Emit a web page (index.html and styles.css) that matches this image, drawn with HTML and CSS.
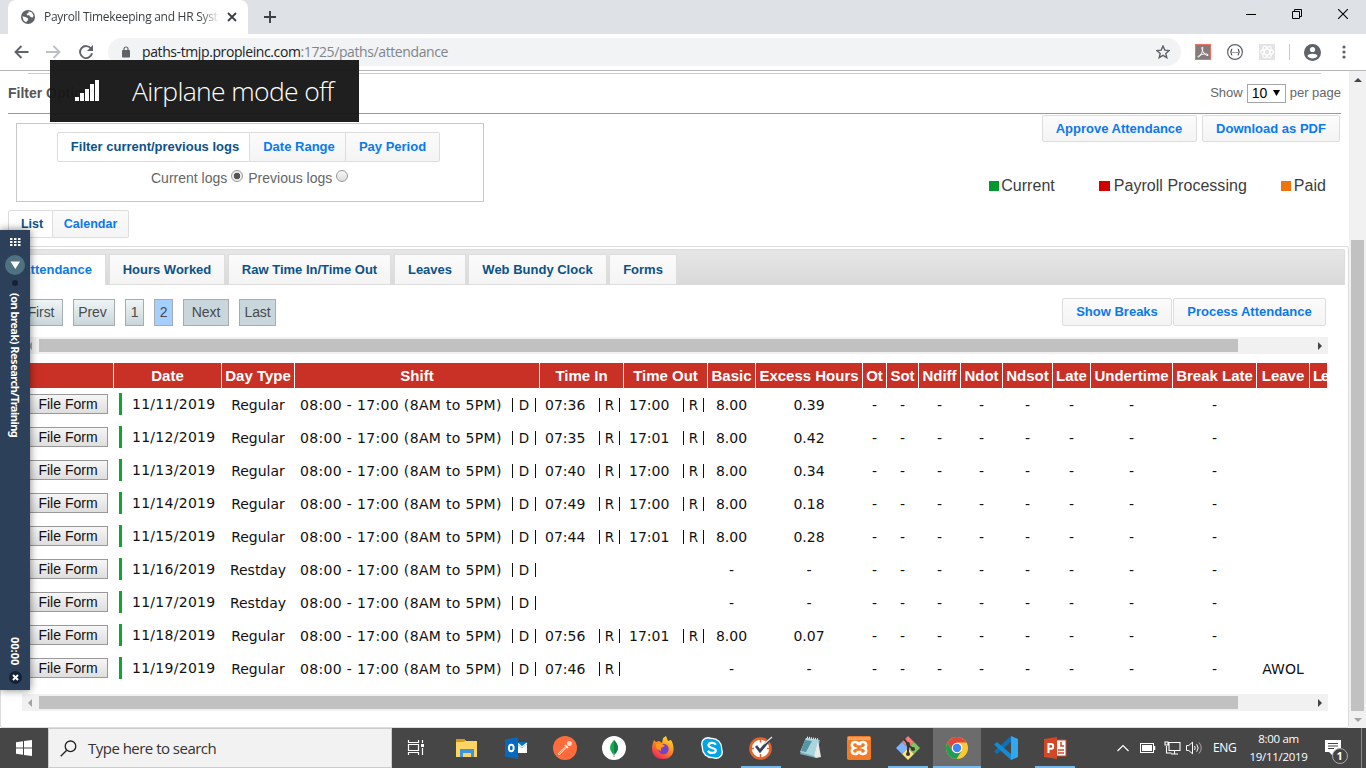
FILE: index.html
```html
<!DOCTYPE html>
<html lang="en">
<head>
<meta charset="utf-8">
<title>Payroll Timekeeping and HR System</title>
<link rel="stylesheet" href="styles.css">
</head>
<body>
<div class="tabstrip">
  <div class="browser-tab">
    <svg class="globe" width="14" height="14" viewBox="0 0 14 14"><circle cx="7" cy="7" r="7" fill="#5f6368"/><path d="M7.5 1.3 11 2.5 12.6 6 11.2 7.8 9 6.6 8 5 6.2 5.4 5.6 3.8 7.6 3zM1.4 6.3 4.5 7 7.2 8.6 6.6 10.6 5 12.2 2.6 10.6z" fill="#fff"/></svg>
    <span class="browser-title">Payroll Timekeeping and HR Syst</span>
    <svg class="tab-x" width="10" height="10" viewBox="0 0 10 10"><path d="M1 1l8 8M9 1l-8 8" stroke="#3c4043" stroke-width="1.8"/></svg>
  </div>
  <svg class="new-tab" width="12" height="12" viewBox="0 0 12 12"><path d="M6 0v12M0 6h12" stroke="#3c4043" stroke-width="1.9"/></svg>
  <div class="window-controls">
    <svg width="10" height="10" viewBox="0 0 10 10"><path d="M0 5.5h10" stroke="#000"/></svg>
    <svg width="10" height="10" viewBox="0 0 10 10"><path d="M.5 2.5h7v7h-7zM2.5 2V.5h7v7H8" fill="none" stroke="#000"/></svg>
    <svg width="10" height="10" viewBox="0 0 10 10"><path d="M0 0l10 10M10 0L0 10" stroke="#000" stroke-width="1.1"/></svg>
  </div>
</div>
<div class="toolbar">
  <svg class="nav-back" width="15" height="14" viewBox="0 0 15 14"><path d="M14.500 7H1.500M7.500 1l-6 6 6 6" fill="none" stroke="#5f6368" stroke-width="1.9"/></svg>
  <svg class="nav-forward" width="15" height="14" viewBox="0 0 15 14"><path d="M0 7h13M7.500 1l6 6-6 6" fill="none" stroke="#bdc1c6" stroke-width="1.9"/></svg>
  <svg class="nav-reload" width="14" height="14" viewBox="0 0 14 14"><path d="M12 3.600A6 6 0 1 0 13 8.200" fill="none" stroke="#5f6368" stroke-width="1.9"/><path d="M14 0v6H8z" fill="#5f6368"/></svg>
  <div class="omnibox">
    <svg width="8" height="12" viewBox="0 0 8 12"><path d="M2 5V3a2 2 0 0 1 4 0v2" fill="none" stroke="#5f6368" stroke-width="1.200"/><rect y="4" width="8" height="7.500" rx=".8" fill="#5f6368"/></svg>
    <span class="url">paths-tmjp.propleinc.com<i>:1725/paths/attendance</i></span>
    <svg class="star" width="14" height="14" viewBox="0 0 14 14"><path d="M7 1l1.800 4.100 4.300.4-3.300 2.900 1 4.300L7 10.400l-3.800 2.300 1-4.300L.9 5.500l4.300-.4z" fill="none" stroke="#5f6368" stroke-width="1.400"/></svg>
  </div>
  <div class="extensions">
    <svg width="16" height="16" viewBox="0 0 16 16"><rect x=".5" y=".5" width="15" height="15" fill="#857b7b" stroke="#ee705e"/><path d="M7.300 3c-.8 0-.6 2 .7 4.500S11.500 12 13 11.500c1-.8-1-2-4-1.500s-6 1.700-6 2.800 2-.2 3.300-3S8.300 3 7.300 3z" fill="none" stroke="#fff" stroke-width="1"/></svg>
    <svg width="16" height="16" viewBox="0 0 16 16"><circle cx="8" cy="8" r="7.400" fill="#fff" stroke="#5f6368" stroke-width="1.200"/><path d="M5.300 5c-1.600 0-.3 2.600-1.900 3 1.600.4.300 3 1.900 3M10.700 5c1.600 0 .3 2.600 1.900 3-1.600.4-.3 3-1.900 3" fill="none" stroke="#444" stroke-width="1.100"/><path d="M5.500 8.500h5" stroke="#444" stroke-width="1.100" stroke-dasharray="1 1"/></svg>
    <svg width="16" height="16" viewBox="0 0 16 16"><rect width="16" height="16" fill="#e3e3e3"/><g fill="none" stroke="#fff" stroke-width="1.100"><ellipse cx="8" cy="8" rx="6.500" ry="2.600"/><ellipse cx="8" cy="8" rx="6.500" ry="2.600" transform="rotate(60 8 8)"/><ellipse cx="8" cy="8" rx="6.500" ry="2.600" transform="rotate(120 8 8)"/></g></svg>
    <span class="divider"></span>
    <svg class="avatar" width="17" height="17" viewBox="0 0 17 17"><circle cx="8.500" cy="8.500" r="8.500" fill="#5f6368"/><circle cx="8.500" cy="5.500" r="2.600" fill="#fff"/><path d="M3.400 12c1-3 9.200-3 10.200 0-2 3.200-8.200 3.200-10.200 0z" fill="#fff"/></svg>
    <svg class="kebab" width="4" height="14" viewBox="0 0 4 14"><circle cx="2" cy="2" r="1.600" fill="#5f6368"/><circle cx="2" cy="7" r="1.600" fill="#5f6368"/><circle cx="2" cy="12" r="1.600" fill="#5f6368"/></svg>
  </div>
</div>
<div class="viewport">
  <main class="page">
    <div class="rule-blue"></div>
    <div class="filter-head">
      <b>Filter Options</b>
      <span class="per-page">Show <span class="select">10<svg width="7" height="6" viewBox="0 0 7 6"><path d="M0 0h7L3.500 6z" fill="#000"/></svg></span> per page</span>
    </div>
    <div class="upper">
      <div class="filter-box">
        <div class="segmented"><span class="on w-cur">Filter current/previous logs</span><span class="w-range">Date Range</span><span class="w-period">Pay Period</span></div>
        <div class="radios"><span>Current logs</span><i class="radio checked"></i><span>Previous logs</span><i class="radio"></i></div>
      </div>
      <div class="upper-right">
        <div class="actions"><span class="btn w-approve">Approve Attendance</span><span class="btn w-pdf">Download as PDF</span></div>
        <div class="legend"><span class="green">Current</span><span class="red">Payroll Processing</span><span class="orange">Paid</span></div>
      </div>
    </div>
    <div class="segmented views"><span class="on w-list">List</span><span class="w-cal">Calendar</span></div>
    <section class="panel">
      <nav class="tabs"><span class="active">Attendance</span><span class="t-hours">Hours Worked</span><span class="t-raw">Raw Time In/Time Out</span><span class="t-leaves">Leaves</span><span class="t-web">Web Bundy Clock</span><span class="t-forms">Forms</span></nav>
      <div class="pager-row">
        <div class="pager"><span class="p-first">First</span><span class="p-prev">Prev</span><span class="p-num">1</span><span class="p-num sel">2</span><span class="p-next flat">Next</span><span class="p-last flat">Last</span></div>
        <div class="pager-actions"><span class="btn w-breaks">Show Breaks</span><span class="btn w-process">Process Attendance</span></div>
      </div>
      <div class="hscroll"><i class="arrow-left"></i><div class="thumb"></div><i class="arrow-right"></i></div>
      <div class="grid">
        <div class="row head"><span></span><span>Date</span><span>Day Type</span><span>Shift</span><span>Time In</span><span>Time Out</span><span>Basic</span><span>Excess Hours</span><span>Ot</span><span>Sot</span><span>Ndiff</span><span>Ndot</span><span>Ndsot</span><span>Late</span><span>Undertime</span><span>Break Late</span><span>Leave</span><span class="cut">Le</span></div>
        <div class="row"><span class="form"><button>File Form</button></span><span class="date">11/11/2019</span><span>Regular</span><span class="shift"><span>08:00 - 17:00 (8AM to 5PM)</span><em>D</em></span><span class="time"><span>07:36</span><em>R</em></span><span class="time"><span>17:00</span><em>R</em></span><span>8.00</span><span>0.39</span><span>-</span><span>-</span><span>-</span><span>-</span><span>-</span><span>-</span><span>-</span><span>-</span><span></span></div>
        <div class="row"><span class="form"><button>File Form</button></span><span class="date">11/12/2019</span><span>Regular</span><span class="shift"><span>08:00 - 17:00 (8AM to 5PM)</span><em>D</em></span><span class="time"><span>07:35</span><em>R</em></span><span class="time"><span>17:01</span><em>R</em></span><span>8.00</span><span>0.42</span><span>-</span><span>-</span><span>-</span><span>-</span><span>-</span><span>-</span><span>-</span><span>-</span><span></span></div>
        <div class="row"><span class="form"><button>File Form</button></span><span class="date">11/13/2019</span><span>Regular</span><span class="shift"><span>08:00 - 17:00 (8AM to 5PM)</span><em>D</em></span><span class="time"><span>07:40</span><em>R</em></span><span class="time"><span>17:00</span><em>R</em></span><span>8.00</span><span>0.34</span><span>-</span><span>-</span><span>-</span><span>-</span><span>-</span><span>-</span><span>-</span><span>-</span><span></span></div>
        <div class="row"><span class="form"><button>File Form</button></span><span class="date">11/14/2019</span><span>Regular</span><span class="shift"><span>08:00 - 17:00 (8AM to 5PM)</span><em>D</em></span><span class="time"><span>07:49</span><em>R</em></span><span class="time"><span>17:00</span><em>R</em></span><span>8.00</span><span>0.18</span><span>-</span><span>-</span><span>-</span><span>-</span><span>-</span><span>-</span><span>-</span><span>-</span><span></span></div>
        <div class="row"><span class="form"><button>File Form</button></span><span class="date">11/15/2019</span><span>Regular</span><span class="shift"><span>08:00 - 17:00 (8AM to 5PM)</span><em>D</em></span><span class="time"><span>07:44</span><em>R</em></span><span class="time"><span>17:01</span><em>R</em></span><span>8.00</span><span>0.28</span><span>-</span><span>-</span><span>-</span><span>-</span><span>-</span><span>-</span><span>-</span><span>-</span><span></span></div>
        <div class="row"><span class="form"><button>File Form</button></span><span class="date">11/16/2019</span><span>Restday</span><span class="shift"><span>08:00 - 17:00 (8AM to 5PM)</span><em>D</em></span><span></span><span></span><span>-</span><span>-</span><span>-</span><span>-</span><span>-</span><span>-</span><span>-</span><span>-</span><span>-</span><span>-</span><span></span></div>
        <div class="row"><span class="form"><button>File Form</button></span><span class="date">11/17/2019</span><span>Restday</span><span class="shift"><span>08:00 - 17:00 (8AM to 5PM)</span><em>D</em></span><span></span><span></span><span>-</span><span>-</span><span>-</span><span>-</span><span>-</span><span>-</span><span>-</span><span>-</span><span>-</span><span>-</span><span></span></div>
        <div class="row"><span class="form"><button>File Form</button></span><span class="date">11/18/2019</span><span>Regular</span><span class="shift"><span>08:00 - 17:00 (8AM to 5PM)</span><em>D</em></span><span class="time"><span>07:56</span><em>R</em></span><span class="time"><span>17:01</span><em>R</em></span><span>8.00</span><span>0.07</span><span>-</span><span>-</span><span>-</span><span>-</span><span>-</span><span>-</span><span>-</span><span>-</span><span></span></div>
        <div class="row"><span class="form"><button>File Form</button></span><span class="date">11/19/2019</span><span>Regular</span><span class="shift"><span>08:00 - 17:00 (8AM to 5PM)</span><em>D</em></span><span class="time"><span>07:46</span><em>R</em></span><span></span><span>-</span><span>-</span><span>-</span><span>-</span><span>-</span><span>-</span><span>-</span><span>-</span><span>-</span><span>-</span><span>AWOL</span></div>
      </div>
      <div class="hscroll"><i class="arrow-left"></i><div class="thumb"></div><i class="arrow-right"></i></div>
    </section>
  </main>
  <div class="vscroll"><i class="arrow-up"></i><div class="vthumb"></div><i class="arrow-down"></i></div>
</div>
<footer class="taskbar">
  <div class="start"><svg width="16" height="16" viewBox="0 0 16 16"><path d="M0 2.200 7 1.200V7.500H0zM8 1 16 0v7.500H8zM0 8.500h7v6.300L0 13.800zM8 8.500h8V16L8 15z" fill="#fff"/></svg></div>
  <div class="search"><svg width="17" height="17" viewBox="0 0 17 17"><circle cx="10.500" cy="6.300" r="5.300" fill="none" stroke="#222" stroke-width="1.300"/><path d="M6.700 10.200.7 16.200" stroke="#222" stroke-width="1.300"/></svg><span>Type here to search</span></div>
  <div class="apps">
    <span><svg width="18" height="18" viewBox="0 0 18 18"><path d="M1.500 5.500h10v6h-10zM1.500 1v2.500h10V1M1.500 16v-2.500h10V16M15.500 1v3M15.500 9v7" fill="none" stroke="#fff" stroke-width="1.200"/><rect x="14" y="5" width="3" height="3" fill="#fff"/></svg></span>
    <span><svg width="24" height="24" viewBox="0 0 24 24"><path d="M1 3h8l2 2h11v16H1z" fill="#fcd462"/><path d="M1 3h8l1.500 2L8 6H1z" fill="#d99a12"/><path d="M5 13h14v8h-3v-4H8v4H5z" fill="#3f94d9"/></svg></span>
    <span><svg width="24" height="24" viewBox="0 0 24 24"><rect x="12" y="6" width="11" height="11" fill="#fff"/><path d="M12 6h11v2l-5 4-5-4z" fill="#0872c4"/><path d="M14 7.500l4 3.500 5-4" fill="none" stroke="#fff" stroke-width="1.300"/><path d="M1 3.500 14 1v22L1 20.500z" fill="#0768bd"/><ellipse cx="7.300" cy="12" rx="2.400" ry="3.200" fill="none" stroke="#fff" stroke-width="1.900"/></svg></span>
    <span><svg width="24" height="24" viewBox="0 0 24 24"><circle cx="12" cy="12" r="12" fill="#ff6c3b"/><path d="M5.500 18.500 14 10" stroke="#ffe9df" stroke-width="2.200"/><path d="M6 18l8-8" stroke="#ff6c3b" stroke-width=".6"/><circle cx="16.300" cy="7.500" r="2.500" fill="#ffd9c9"/><path d="M12 9l3 3" stroke="#fff" stroke-width="1.500"/></svg></span>
    <span><svg width="24" height="24" viewBox="0 0 24 24"><circle cx="12" cy="12" r="12" fill="#fff"/><path d="M12 4c5 5 5.500 10 0 15-5.500-5-5-10 0-15z" fill="#13aa52"/><path d="M12 4c5 5 5.500 10 0 15z" fill="#128047"/><path d="M12 17v4" stroke="#90a090"/></svg></span>
    <span><svg width="24" height="24" viewBox="0 0 24 24"><defs><linearGradient id="fox" x1=".8" y1="0" x2=".2" y2="1"><stop offset="0" stop-color="#ffe32a"/><stop offset=".5" stop-color="#ff8420"/><stop offset="1" stop-color="#ed1d64"/></linearGradient></defs><path d="M3 4l2 2 3-1 3 2 1-5 3-2 2 5 3-1c5 8 3 19-8 19C4 23 1 18 1 12c0-3 1-5 2-8z" fill="url(#fox)"/><circle cx="12.500" cy="13" r="5.200" fill="#7542c8"/><path d="M5 8l6 0 3 2-4 2 0 3-5-3z" fill="#ff981e"/></svg></span>
    <span><svg width="24" height="24" viewBox="0 0 24 24"><circle cx="8" cy="8" r="7" fill="#fff"/><circle cx="16" cy="16" r="7" fill="#fff"/><circle cx="12" cy="12" r="10.300" fill="#fff"/><circle cx="8" cy="8" r="5.600" fill="#00a5e8"/><circle cx="16" cy="16" r="5.600" fill="#00a5e8"/><circle cx="12" cy="12" r="9" fill="#00a5e8"/><path d="M15.800 8.800C14.500 6 8.500 6.500 8.500 9.300c0 3.300 7.300 2 7.300 5.200 0 3-6.400 3.300-7.800.2" fill="none" stroke="#fff" stroke-width="2.200"/></svg></span>
    <span class="run"><svg width="24" height="24" viewBox="0 0 24 24"><circle cx="11.500" cy="12.500" r="10" fill="#fff" stroke="#e5642c" stroke-width="2.600"/><path d="M11.500 2.500v4M11.500 18v4M2 12.500h3M18 12.500h3" stroke="#e5642c" stroke-width="1.500"/><path d="M7 10l4 5L22 2" fill="none" stroke="#35445c" stroke-width="2.800"/><path d="M15 8l8-7" stroke="#ddd" stroke-width="1.400"/></svg></span>
    <span><svg width="24" height="24" viewBox="0 0 24 24"><path d="M8 2l14 2-4 18L2 18z" fill="#74aebb"/><path d="M8 2l12 2-4 16L2 16z" fill="#a9d6dc"/><path d="M7 4l7 1-6 11-5-1z" fill="#5695a4"/><path d="M20 4l3 17-5 1-2-2z" fill="#e9e9e9"/><path d="M9 1.500l12 2" stroke="#eee" stroke-dasharray="1 1" stroke-width="2"/></svg></span>
    <span><svg width="24" height="24" viewBox="0 0 24 24"><rect width="24" height="24" rx="2" fill="#f47b25"/><path d="M1 1h22v3H1z" fill="#f9a25f"/><path d="M8 6c-4 0-4 5-1 6-3 1-3 6 1 6 2 0 3-1 3-2h2c0 1 1 2 3 2 4 0 4-5 1-6 3-1 3-6-1-6-2 0-3 1-3 2h-2c0-1-1-2-3-2z" fill="none" stroke="#fff" stroke-width="2.600"/></svg></span>
    <span class="run"><svg width="24" height="24" viewBox="0 0 24 24"><path d="M12 0l6 6-6 6-6-6z" fill="#f57b7b"/><path d="M18 6l6 6-6 6-6-6z" fill="#7ec661"/><path d="M6 6l6 6-6 6-6-6z" fill="#80b3ff"/><path d="M12 12l6 6-6 6-6-6z" fill="#ffe082"/><path d="M8 3l4 5v10M12 9l5 4" fill="none" stroke="#3b3532" stroke-width="2"/><circle cx="12" cy="8" r="2" fill="#3b3532"/><circle cx="17" cy="13" r="2" fill="#3b3532"/><circle cx="12" cy="18" r="2" fill="#3b3532"/></svg></span>
    <span class="current"><svg width="24" height="24" viewBox="0 0 24 24"><circle cx="12" cy="12" r="11" fill="#fcc934"/><path d="M2.500 6.500A11 11 0 0 1 21.500 6.500H12L7.200 15z" fill="#e0483e"/><path d="M2.500 6.500A11 11 0 0 0 11.500 23l5.200-8.200-9.500.2z" fill="#1e9d58"/><circle cx="12" cy="12" r="5.300" fill="#fff"/><circle cx="12" cy="12" r="4.200" fill="#4285f4"/></svg></span>
    <span><svg width="24" height="24" viewBox="0 0 24 24"><path d="M17 0v6L3 18l-3-2.500z" fill="#0b71b8"/><path d="M17 24v-6L3 6 0 8.500z" fill="#168bd2"/><path d="M17 0l7 3v18l-7 3z" fill="#31a8ed"/></svg></span>
    <span class="run"><svg width="24" height="24" viewBox="0 0 24 24"><rect x="11" y="4" width="12" height="16" fill="#fff" stroke="#d24726"/><path d="M15 14h6M15 17h6M18 6v4h3" fill="none" stroke="#d24726" stroke-width="1.500"/><path d="M1 3l13-2v22L1 21z" fill="#d24726"/><path d="M5.500 17V8h2.200c3.400 0 3.400 4.800 0 4.800H5.500" fill="none" stroke="#fff" stroke-width="2"/></svg></span>
  </div>
  <div class="tray">
    <svg width="12" height="8" viewBox="0 0 12 8"><path d="M.5 7 6 1.500 11.500 7" fill="none" stroke="#fff" stroke-width="1.200"/></svg>
    <svg class="battery" width="16" height="10" viewBox="0 0 16 10"><rect x=".5" y=".5" width="13" height="9" fill="none" stroke="#fff"/><rect x="2" y="2" width="10" height="6" fill="#fff"/><path d="M14.500 3v4" stroke="#fff" stroke-width="1.500"/></svg>
    <svg class="net" width="17" height="14" viewBox="0 0 17 14"><path d="M5 1.500h11v8H5zM10.500 10v3M7 13h7M2.500 5v7h5M1 1h3v3H1z" fill="none" stroke="#fff" stroke-width="1.100"/></svg>
    <svg class="sound" width="17" height="14" viewBox="0 0 17 14"><path d="M.5 4.500h2.300L6.500 1.200v11.600L2.800 9.500H.5zM8.500 5q1.500 2 0 4M10.700 3.300q3 3.700 0 7.400" fill="none" stroke="#fff"/><path d="M13 1.500q4.500 5.500 0 11" fill="none" stroke="#aaa"/></svg>
    <span class="lang">ENG</span>
    <span class="clock"><span>8:00 am</span><span>19/11/2019</span></span>
    <span class="notify"><svg width="16" height="17" viewBox="0 0 16 17"><path d="M0 0h16v12H8v4l-4-4H0z" fill="#fff"/><path d="M3 3.500h10M3 6h10M3 8.500h6" stroke="#444"/></svg><b>1</b></span>
    <i class="desktop-edge"></i>
  </div>
</footer>
<aside class="tracker">
  <svg width="11" height="8" viewBox="0 0 11 8"><path d="M0 1h11M0 4h11M0 7h11" stroke="#fff" stroke-width="2" stroke-dasharray="2.500 1.500"/></svg>
  <svg class="down" width="20" height="20" viewBox="0 0 20 20"><circle cx="10" cy="10" r="10" fill="#4f7281"/><path d="M5.500 6.500h9.500l-4.700 7.500z" fill="#fff"/></svg>
  <i class="dot"></i>
  <span class="task">(on break) Research/Training</span>
  <span class="timer">00:00</span>
  <svg class="close" width="13" height="13" viewBox="0 0 13 13"><circle cx="6.500" cy="6.500" r="6.500" fill="#14213a"/><path d="M4 4l5 5M9 4L4 9" stroke="#fff" stroke-width="2"/></svg>
</aside>
<div class="toast"><svg width="25" height="22" viewBox="0 0 25 22"><path d="M0 17h4v4H0zM5 13h4v8H5zM10 9h4v12h-4zM15 4h4v17h-4zM20 0h4v21h-4z" fill="#fff"/></svg><span>Airplane mode off</span></div>
</body>
</html>
```
FILE: styles.css
```css
* { box-sizing: border-box; }
body { margin: 0; width: 1366px; height: 768px; overflow: hidden; position: relative; background: #fff; display: flex; flex-direction: column; font: 14px/16px "Liberation Sans", Arial, sans-serif; color: #555; white-space: nowrap; }
svg, i { display: block; flex: none; }
i { font-style: normal; }

.tabstrip { height: 34px; background: #dee1e6; display: flex; align-items: center; padding-left: 8px; }
.browser-tab { width: 240px; height: 34px; background: #fff; border-radius: 8px 8px 0 0; display: flex; align-items: center; padding-left: 13px; }
.browser-title { width: 177px; margin-left: 9px; font: 12px/16px "Open Sans", sans-serif; letter-spacing: -.28px; color: #3c4043; -webkit-mask-image: linear-gradient(90deg, #000 156px, transparent 176px); }
.tab-x { margin-left: 6px; }
.new-tab { margin-left: 16px; }
.window-controls { margin-left: auto; display: flex; gap: 36px; padding: 0 18px 6px 0; }
.toolbar { height: 37px; flex: none; border-bottom: 1px solid #b6b4b8; display: flex; align-items: center; padding: 0 0 0 14px; }
.nav-forward { margin-left: 17px; }
.nav-reload { margin-left: 18px; }
.omnibox { width: 1073px; height: 28px; margin-left: 15px; border-radius: 14px; background: #f1f3f4; display: flex; align-items: center; padding: 0 11px 0 14px; }
.url { font: 14px/18px "Open Sans", sans-serif; letter-spacing: -.4px; color: #202124; margin-left: 12px; }
.url i { display: inline; color: #80868b; }
.star { margin-left: auto; }
.extensions { display: flex; align-items: center; margin-left: 14px; }
.extensions svg + svg { margin-left: 16px; }
.divider { width: 1px; height: 16px; background: #c6c9cc; margin-left: 14px; }
.extensions .avatar { margin-left: 14px; }
.extensions svg.kebab { margin-left: 21px; }

.viewport { height: 657px; flex: none; display: flex; }
.page { width: 1349px; height: 657px; }
.rule-blue { height: 1px; margin: 2px 28px 0; background: #9edcf2; }
.filter-head { height: 40px; margin: 0 8px; border-bottom: 1px solid #999; display: flex; justify-content: space-between; align-items: center; padding-bottom: 1px; }
.filter-head b { color: #555; }
.per-page { display: flex; align-items: center; font-size: 13px; letter-spacing: 0; color: #666; gap: 4px; }
.select { width: 39px; height: 19px; border: 1px solid #a6a6a6; display: flex; align-items: center; gap: 6px; padding-left: 4px; color: #000; font-size: 14px; letter-spacing: 0; }
.upper { display: flex; justify-content: space-between; padding: 0 9px 0 16px; height: 96px; }
.filter-box { width: 468px; height: 79px; margin-top: 9px; border: 1px solid #c8c8c8; padding: 8px 0 0 40px; }
.segmented { display: flex; font-weight: bold; font-size: 13px; color: #0b79ee; }
.segmented span { height: 30px; display: flex; align-items: center; justify-content: center; border: 1px solid #ddd; border-left-width: 0; background: linear-gradient(#fbfbfb, #f4f4f4); }
.segmented span:first-child { border-left-width: 1px; border-radius: 2px 0 0 2px; }
.segmented span:last-child { border-radius: 0 2px 2px 0; }
.segmented .on { background: #fff; color: #0c5287; }
.w-cur { width: 193px; padding-left: 3px; }
.w-range { width: 96px; padding-left: 3px; }
.w-period { width: 94px; }
.radios { display: flex; align-items: center; padding: 8px 0 0 94px; color: #666; }
.radio { width: 12px; height: 12px; border-radius: 50%; border: 1px solid #999; background: linear-gradient(#f6f6f6, #ddd); margin: 0 5px 4px 4px; }
.radio.checked { background: radial-gradient(circle, #555 0 3px, #eee 3.6px); }
.upper-right { display: flex; flex-direction: column; }
.actions { display: flex; justify-content: flex-end; gap: 5px; padding-top: 1px; }
.btn { height: 28px; border: 1px solid #ddd; border-radius: 2px; background: linear-gradient(#fbfbfb, #f4f4f4); color: #0b79ee; font-weight: bold; font-size: 13px; display: flex; align-items: center; justify-content: center; }
.actions .btn { height: 27px; }
.w-approve { width: 155px; padding-right: 1px; }
.w-pdf { width: 138px; }
.legend { display: flex; justify-content: flex-end; font-size: 16px; line-height: 20px; color: #3c3c3c; padding: 34px 14px 0 0; letter-spacing: .03px; }
.legend span { display: flex; align-items: center; }
.legend span::before { content: ""; width: 10px; height: 10px; margin-right: 2px; background: #00992e; }
.legend .red { margin-left: 44px; }
.legend .red::before { background: #d40000; margin-right: 4px; width: 11px; }
.legend .orange { margin-left: 34px; }
.legend .orange::before { background: #f0740d; margin-right: 3px; }
.views { margin-left: 8px; font-size: 12.500px; }
.views span { height: 28px; }
.w-list { width: 45px; padding-left: 3px; }
.w-cal { width: 76px; }

.panel { margin-top: 8px; height: 482px; border: 1px solid #ddd; border-radius: 2px; padding: 2px 3px; }
.tabs { height: 36px; background: linear-gradient(#e6e6e6, #d9d9d9); border: 1px solid #ddd; border-bottom: 0; border-radius: 2px 2px 0 0; display: flex; padding: 4px 0 0 6px; font-weight: bold; font-size: 13px; color: #0c5287; gap: 3px; }
.tabs span { height: 31px; display: flex; align-items: center; justify-content: center; background: linear-gradient(#fbfbfb, #f4f4f4); border: 1px solid #ddd; }
.tabs .active { width: 95px; background: #fff; border-bottom: 0; color: #0b79ee; justify-content: flex-end; padding-right: 13px; }
.t-hours { width: 116px; }
.t-raw { width: 163px; }
.t-leaves { width: 72px; }
.t-web { width: 139px; margin-left: -1px; }
.t-forms { width: 68px; margin-left: -1px; }
.pager-row { display: flex; justify-content: space-between; padding: 13px 19px 0 18px; height: 52px; }
.pager { display: flex; gap: 10px; padding-top: 1px; }
.pager span { height: 27px; border: 1px solid #a7acae; display: flex; align-items: center; justify-content: center; font-size: 14px; letter-spacing: -.1px; padding: 0 3px 1px 0; color: #4a4a4a; background: linear-gradient(#f0f5f6, #c8d6da); }
.p-first { width: 41px; }
.p-prev { width: 42px; }
.pager .p-num { width: 19px; padding-right: 0; }
.p-next { width: 46px; }
.p-last { width: 37px; }
.pager .p-next, .pager .p-last { padding-right: 0; }
.pager .sel { background: #a4cfff; }
.pager .flat { background: #c9d6db; }
.pager-actions { display: flex; gap: 1px; }
.w-breaks { width: 110px; }
.w-process { width: 153px; }
.hscroll { width: 1306px; height: 17px; margin-left: 18px; background: #f1f1f1; display: flex; align-items: center; padding: 0 6px 0 6px; }
.thumb { width: 1199px; height: 13px; background: #c1c1c1; margin-left: 7px; }
.arrow-left { border: 4px solid transparent; border-left: 0; border-right-color: #a3a3a3; }
.arrow-right { border: 4px solid transparent; border-right: 0; border-left-color: #444; margin-left: auto; }
.grid { width: 1305px; margin: 9px 0 9px 18px; overflow: hidden; color: #111; font: 14px/35px "DejaVu Sans", Verdana, sans-serif; }
.row { height: 33px; display: grid; grid-template-columns: 92px 108px 73px 245px 84px 84px 48px 107px 24px 32px 42px 42px 50px 38px 82px 84px 53px 18px; text-align: center; }
.row > span { height: 33px; padding-right: 1px; }
.row.head { height: 25px; background: #c93026; color: #fff; font: bold 15px/26px "Liberation Sans", Arial, sans-serif; }
.row.head > span { height: 25px; padding-right: 0; border-right: 1px solid #fff; }
.row.head > .cut { text-align: left; padding-left: 3px; letter-spacing: -1.200px; border-right: 0; }
.row .form { display: flex; align-items: center; justify-content: flex-end; padding: 0 6px 2px 0; }
.form button { width: 82px; height: 20px; border: 1px solid #999; border-radius: 0; background: linear-gradient(#f6f6f6, #dedede); padding: 0 0 0 2px; font: 14px/16px "Liberation Sans", Arial, sans-serif; color: #111; }
.row .date { display: flex; align-items: center; letter-spacing: .28px; line-height: 22px; padding-bottom: 1px; }
.date::before { content: ""; width: 3px; height: 22px; background: #0aa82e; margin: 0 10px 0 5px; }
.row .shift, .row .time { display: flex; justify-content: space-between; padding: 0 4px 0 5px; }
.shift > span { letter-spacing: .34px; }
em { font-style: normal; width: 24px; height: 14px; margin-top: 10px; border: solid #111; border-width: 0 1px; line-height: 14px; font-size: 13.500px; }
.time em { width: 21px; }
.vscroll { width: 17px; background: #f1f1f1; padding: 7px 2px 6px; display: flex; flex-direction: column; align-items: center; }
.arrow-up { border: 4px solid transparent; border-top: 0; border-bottom-color: #444; }
.vthumb { width: 13px; height: 471px; margin-top: 158px; background: #c1c1c1; }
.arrow-down { border: 4px solid transparent; border-bottom: 0; border-top-color: #a3a3a3; margin-top: auto; }

.taskbar { height: 40px; flex: none; background: #464646; display: flex; color: #fff; font-family: "Open Sans", sans-serif; }
.start { width: 48px; display: grid; place-items: center; }
.search { width: 344px; background: #f2f2f2; border: 1px solid #ccc; display: flex; align-items: center; gap: 11px; padding-left: 11px; color: #333; font-size: 15px; letter-spacing: -.52px; }
.apps { display: flex; }
.apps span { width: 49px; display: grid; place-items: center; padding-left: 3px; }
.apps span:first-child { padding: 0 2px 0 0; }
.apps .run { background: linear-gradient(#76b9ed, #76b9ed) 6px 100% / 40px 2px no-repeat; }
.apps .current { width: 48px; margin: 0 -1px 0 2px; background: #6c6c6c; border-bottom: 2px solid #76b9ed; padding: 2px 0 0; }
.tray { flex: 1; display: flex; align-items: center; padding-left: 39px; font-size: 12px; }
.battery { margin-left: 11px; }
.net { margin-left: 8px; }
.sound { margin-left: 5px; }
.lang { margin-left: 10px; letter-spacing: -.3px; }
.clock { display: flex; flex-direction: column; align-items: center; width: 60px; margin-left: 12px; font-size: 11.500px; line-height: 18px; letter-spacing: -.3px; }
.notify { position: relative; margin-left: 16px; }
.notify b { position: absolute; left: 7px; top: 8px; width: 16px; height: 16px; border: 1px solid #aaa; border-radius: 50%; background: #444; font-size: 11px; line-height: 14px; text-align: center; }
.desktop-edge { width: 1px; height: 40px; background: #888; margin-left: 20px; }

.tracker { position: absolute; left: 0; top: 230px; width: 30px; height: 460px; background: #2c405a; box-shadow: 0 0 8px rgba(0,0,0,.5); display: flex; flex-direction: column; align-items: center; padding-top: 8px; color: #fff; font: bold 11px/14px "Noto Sans", sans-serif; }
.down { margin-top: 9px; }
.dot { width: 6px; height: 6px; border-radius: 50%; background: #14213a; margin-top: 5px; }
.task, .timer { writing-mode: vertical-rl; }
.task { margin-top: 7px; letter-spacing: -.5px; }
.timer { margin-top: auto; margin-bottom: 6px; }
.close { margin-bottom: 6px; }
.toast { position: absolute; left: 50px; top: 60px; width: 309px; height: 62px; background: rgba(24,24,24,.97); display: flex; align-items: center; color: #fff; padding-left: 25px; font: 300 26.500px/36px "Open Sans", sans-serif; }
.toast span { margin-left: 32px; letter-spacing: -.65px; }
```
